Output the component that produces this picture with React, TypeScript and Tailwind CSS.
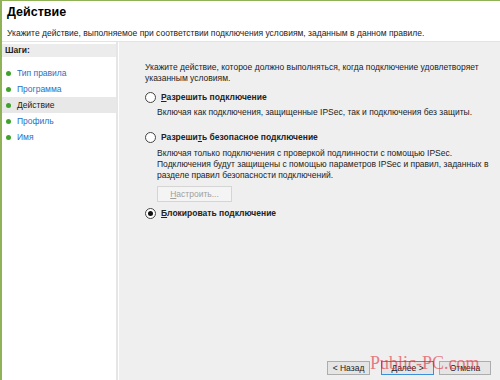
import React from "react";

const steps = ["Тип правила", "Программа", "Действие", "Профиль", "Имя"];

function Radio({ checked }: { checked?: boolean }) {
  return (
    <span className="w-[11px] h-[11px] rounded-full border border-[#444] bg-white flex items-center justify-center shrink-0">
      {checked && <span className="w-[5px] h-[5px] rounded-full bg-[#111]" />}
    </span>
  );
}

function WinButton({ children, focus, w }: { children: React.ReactNode; focus?: boolean; w: string }) {
  return (
    <button
      className={
        "h-[14px] text-[8.5px] leading-none text-[#222] bg-[#e5e5e5] border " +
        w +
        " " +
        (focus ? "border-[#3c8fd8]" : "border-[#adadad]")
      }
    >
      {children}
    </button>
  );
}

export default function App() {
  return (
    <div
      className="w-[500px] h-[380px] bg-white border-l-2 border-t border-[#8fb257] flex flex-col relative overflow-hidden text-[#222]"
      style={{ fontFamily: "'Liberation Sans', Arial, sans-serif" }}
    >
      {/* Заголовок */}
      <div className="h-[41px] px-[5px] pt-[4px] border-b border-[#e3e3e3]">
        <h1 className="text-[12.5px] font-bold leading-[14px] text-black">Действие</h1>
        <p className="text-[8.5px] mt-[9px] leading-[11px] whitespace-nowrap">
          Укажите действие, выполняемое при соответствии подключения условиям, заданным в данном правиле.
        </p>
      </div>

      <div className="flex flex-1">
        {/* Шаги */}
        <div className="w-[116px] pt-[2px] border-r-2 border-[#e6e6e6] bg-white">
          <div className="h-[13px] bg-[#ececec] text-[8.5px] font-bold pl-[3px] leading-[13px]">Шаги:</div>
          <div className="mt-[8px] flex flex-col">
            {steps.map((s) => (
              <div
                key={s}
                className={
                  "h-[16px] flex items-center gap-[6px] pl-[4px] text-[8.5px] " +
                  (s === "Действие" ? "bg-[#e8e8e8] text-[#222]" : "text-[#1f6fc5]")
                }
              >
                <span className="w-[5px] h-[5px] rounded-full bg-[#3fa32a]" />
                {s}
              </div>
            ))}
          </div>
        </div>

        {/* Содержимое */}
        <div className="flex-1 bg-[#efefef] ml-[1px] pl-[26px] pr-[10px] pt-[20px] text-[8.5px] leading-[11px] relative whitespace-nowrap">
          <p>
            Укажите действие, которое должно выполняться, когда подключение удовлетворяет
            <br />
            указанным условиям.
          </p>

          <div className="mt-[8px] flex items-center gap-[5px]">
            <Radio />
            <span className="font-bold">
              <span className="underline">Р</span>азрешить подключение
            </span>
          </div>
          <p className="ml-[12px] mt-[4px]">
            Включая как подключения, защищенные IPSec, так и подключения без защиты.
          </p>

          <div className="mt-[14px] flex items-center gap-[5px]">
            <Radio />
            <span className="font-bold">
              Разреши<span className="underline">т</span>ь безопасное подключение
            </span>
          </div>
          <p className="ml-[12px] mt-[5px]">
            Включая только подключения с проверкой подлинности с помощью IPSec.
            <br />
            Подключения будут защищены с помощью параметров IPSec и правил, заданных в
            <br />
            разделе правил безопасности подключений.
          </p>
          <div className="ml-[12px] mt-[5px] w-[75px] h-[16px] border border-[#d5d5d5] bg-[#f4f4f4] text-[#a0a0a0] flex items-center justify-center">
            <span className="underline">Н</span>астроить...
          </div>

          <div className="mt-[6px] flex items-center gap-[5px]">
            <Radio checked />
            <span className="font-bold">
              <span className="underline">Б</span>локировать подключение
            </span>
          </div>

          <div className="absolute right-[9px] bottom-[5px] flex gap-[5px]">
            <div className="flex gap-[11px]">
              <WinButton w="w-[43px]">&lt; Назад</WinButton>
              <WinButton w="w-[53px]" focus>
                Далее &gt;
              </WinButton>
            </div>
            <WinButton w="w-[52px]">Отмена</WinButton>
          </div>
        </div>
      </div>

      <div
        className="absolute left-[368px] top-[353px] text-[18px] leading-none text-[#e0303a] opacity-60 pointer-events-none"
        style={{ fontFamily: "'Liberation Serif', serif" }}
      >
        Public-PC.com
      </div>
    </div>
  );
}
